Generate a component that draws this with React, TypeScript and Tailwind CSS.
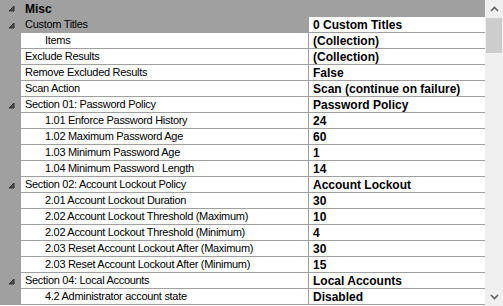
import React from 'react'

type Row = {
  name: string
  value?: string
  kind: 'category' | 'group' | 'item' | 'child'
  selected?: boolean
}

const rows: Row[] = [
  { name: 'Misc', kind: 'category' },
  { name: 'Custom Titles', value: '0 Custom Titles', kind: 'group', selected: true },
  { name: 'Items', value: '(Collection)', kind: 'child' },
  { name: 'Exclude Results', value: '(Collection)', kind: 'item' },
  { name: 'Remove Excluded Results', value: 'False', kind: 'item' },
  { name: 'Scan Action', value: 'Scan (continue on failure)', kind: 'item' },
  { name: 'Section 01: Password Policy', value: 'Password Policy', kind: 'group' },
  { name: '1.01 Enforce Password History', value: '24', kind: 'child' },
  { name: '1.02 Maximum Password Age', value: '60', kind: 'child' },
  { name: '1.03 Minimum Password Age', value: '1', kind: 'child' },
  { name: '1.04 Minimum Password Length', value: '14', kind: 'child' },
  { name: 'Section 02: Account Lockout Policy', value: 'Account Lockout', kind: 'group' },
  { name: '2.01 Account Lockout Duration', value: '30', kind: 'child' },
  { name: '2.02 Account Lockout Threshold (Maximum)', value: '10', kind: 'child' },
  { name: '2.02 Account Lockout Threshold (Minimum)', value: '4', kind: 'child' },
  { name: '2.03 Reset Account Lockout After (Maximum)', value: '30', kind: 'child' },
  { name: '2.03 Reset Account Lockout After (Minimum)', value: '15', kind: 'child' },
  { name: 'Section 04: Local Accounts', value: 'Local Accounts', kind: 'group' },
  { name: '4.2 Administrator account state', value: 'Disabled', kind: 'child' },
]

function Expander() {
  return (
    <svg width="7" height="7" viewBox="0 0 7 7" className="block">
      <polygon points="6,1 6,6 1,6" fill="#505050" stroke="#303030" strokeWidth="1" strokeLinejoin="round" />
    </svg>
  )
}

function GridRow({ row }: { row: Row }) {
  const hasArrow = row.kind === 'category' || row.kind === 'group'

  if (row.kind === 'category') {
    return (
      <div className="flex h-[17px] items-center bg-[#a0a0a0]">
        <div className="flex w-[21px] shrink-0 justify-center pl-[1px]">
          <Expander />
        </div>
        <span className="pl-[4px] text-[12px] font-bold text-black">{row.name}</span>
      </div>
    )
  }

  return (
    <div className="flex h-[16px]">
      <div className="flex w-[21px] shrink-0 items-center justify-center bg-[#a0a0a0] pl-[1px]">
        {hasArrow && <Expander />}
      </div>
      <div
        className={
          'flex w-[288px] shrink-0 items-center overflow-hidden whitespace-nowrap border-r border-b border-[#a0a0a0] tracking-[-0.3px] ' +
          (row.selected ? 'bg-[#a0a0a0]' : 'bg-white') +
          (row.kind === 'child' ? ' pl-[24px]' : ' pl-[4px]')
        }
      >
        {row.name}
      </div>
      <div className="flex flex-1 items-center overflow-hidden whitespace-nowrap border-b border-[#a0a0a0] bg-white pl-[4px] text-[12px] font-bold text-black">
        {row.value}
      </div>
    </div>
  )
}

export default function App() {
  return (
    <div
      className="flex h-[306px] w-[503px] overflow-hidden bg-white text-[11px] leading-none text-black"
      style={{ fontFamily: '"Liberation Sans", Arial, sans-serif' }}
    >
      <div className="flex w-[485px] shrink-0 flex-col">
        {rows.map((r, i) => (
          <GridRow key={i} row={r} />
        ))}
      </div>
      <div className="flex flex-1 flex-col bg-[#f0f0f0]">
        <div className="flex h-[18px] items-center justify-center">
          <svg width="9" height="6" viewBox="0 0 9 6">
            <polyline points="1,5 4.5,1.5 8,5" fill="none" stroke="#606060" strokeWidth="1.6" />
          </svg>
        </div>
        <div className="mx-[1px] h-[35px] bg-[#cdcdcd]" />
        <div className="flex-1" />
        <div className="flex h-[18px] items-center justify-center">
          <svg width="9" height="6" viewBox="0 0 9 6">
            <polyline points="1,1 4.5,4.5 8,1" fill="none" stroke="#606060" strokeWidth="1.6" />
          </svg>
        </div>
      </div>
    </div>
  )
}
